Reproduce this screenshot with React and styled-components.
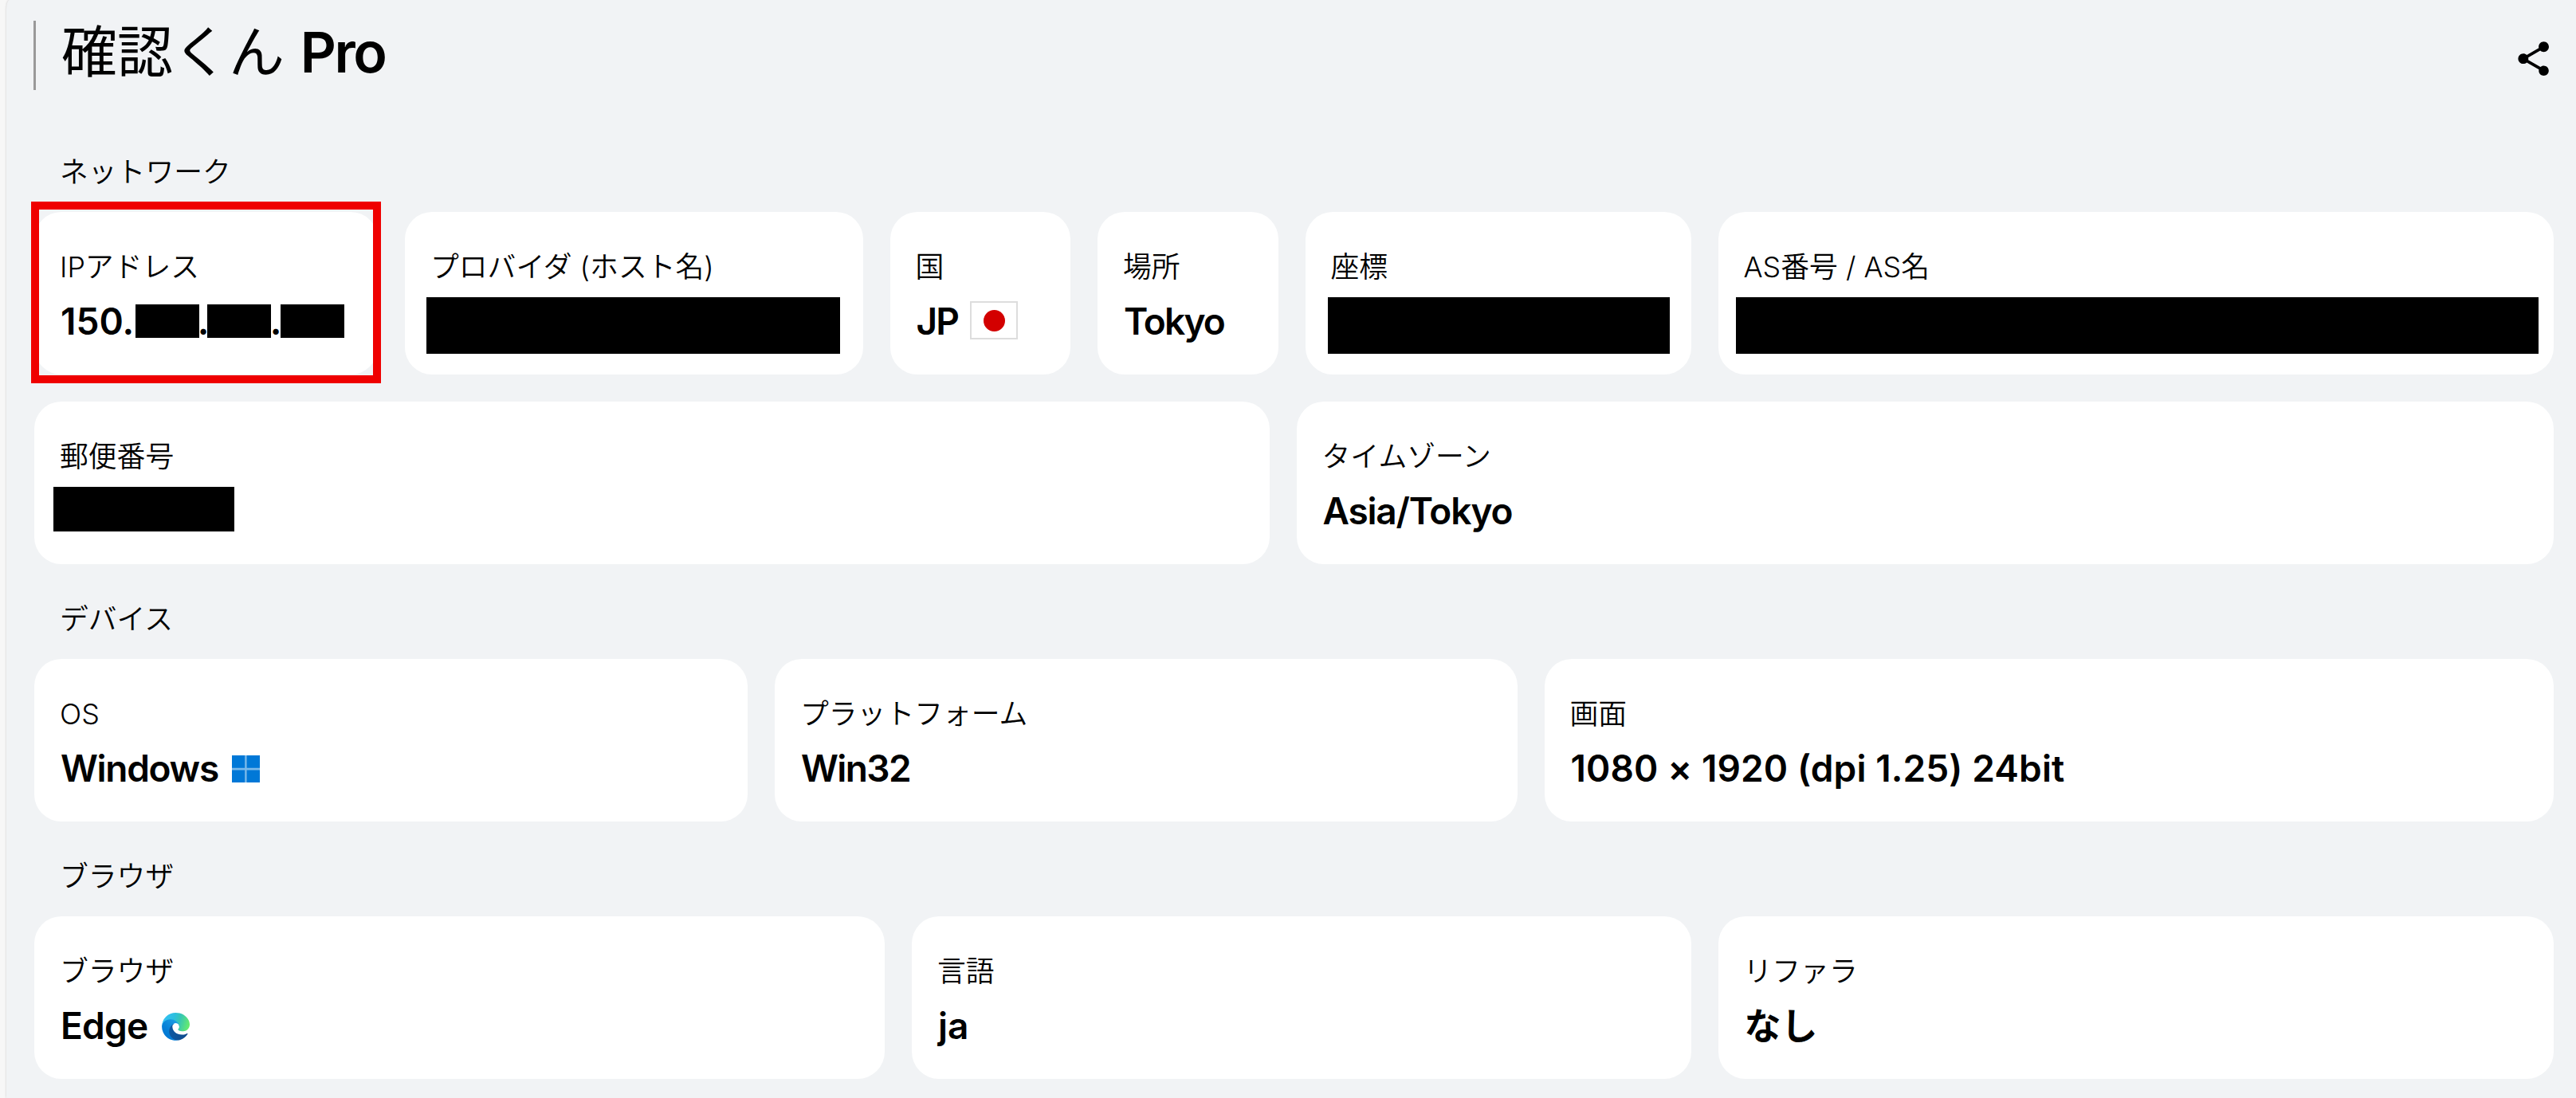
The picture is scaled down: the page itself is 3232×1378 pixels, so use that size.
import { MdShare } from "react-icons/md";
import styled, { createGlobalStyle } from "styled-components";

const WindowsIcon = () => (
  <svg width="35" height="34" viewBox="0 0 35 34">
    <rect width="35" height="34" fill="#7ab9ea" />
    <path fill="#0078d7" d="M0 0h16.2v15.7H0zM18.6 0H35v15.7H18.6zM0 18.4h16.2V34H0zM18.6 18.4H35V34H18.6z" />
  </svg>
);

const EdgeIcon = () => (
  <svg width="35" height="35" viewBox="0 0 256 256">
    <defs>
      <linearGradient id="edgeDark" x1="63" y1="178" x2="241" y2="178" gradientUnits="userSpaceOnUse">
        <stop offset="0" stopColor="#0c59a4" />
        <stop offset="1" stopColor="#114a8b" />
      </linearGradient>
      <linearGradient id="edgeMid" x1="157" y1="100" x2="46" y2="221" gradientUnits="userSpaceOnUse">
        <stop offset="0" stopColor="#1b9de2" />
        <stop offset="0.16" stopColor="#1595df" />
        <stop offset="0.67" stopColor="#0680d7" />
        <stop offset="1" stopColor="#0078d4" />
      </linearGradient>
      <linearGradient id="edgeTop" x1="20" y1="60" x2="245" y2="125" gradientUnits="userSpaceOnUse">
        <stop offset="0" stopColor="#35c1f1" />
        <stop offset="0.35" stopColor="#2cbfe0" />
        <stop offset="0.6" stopColor="#36c6b4" />
        <stop offset="1" stopColor="#66eb6e" />
      </linearGradient>
    </defs>
    <path
      fill="url(#edgeDark)"
      d="M231.07 190.54c-3.33 1.73-6.76 3.27-10.27 4.61a101.3 101.3 0 0 1-35.6 6.42c-46.92 0-87.79-32.27-87.79-73.69.13-11.4 6.42-21.85 16.43-27.3-42.44 1.78-53.35 46.01-53.35 71.92 0 73.27 67.53 80.7 82.08 80.7 7.84 0 19.67-2.28 26.77-4.53l1.3-.44a128.34 128.34 0 0 0 66.6-52.8 4 4 0 0 0-6.17-4.89z"
    />
    <path
      fill="url(#edgeMid)"
      d="M105.73 241.42a79.2 79.2 0 0 1-22.74-21.34 80.72 80.72 0 0 1 29.94-120.5c3.12-1.46 8.45-4.1 15.54-3.99a32.37 32.37 0 0 1 25.69 13.01 31.88 31.88 0 0 1 6.36 18.66c0-.2 24.46-79.6-80-79.6-43.9 0-80 41.66-80 78.21a130.15 130.15 0 0 0 12.11 56 128 128 0 0 0 156.38 67.11 75.55 75.55 0 0 1-62.78-8z"
    />
    <path
      fill="url(#edgeTop)"
      d="M152.33 148.86c-.81 1.05-3.3 2.5-3.3 5.66 0 2.61 1.7 5.12 4.72 7.23 14.38 10 41.49 8.68 41.56 8.68a59.56 59.56 0 0 0 30.27-8.35 61.38 61.38 0 0 0 30.43-52.88c.26-22.41-8-37.31-11.34-43.91C223.46 24.31 177.72.05 128 .05A128 128 0 0 0 0 127.29c.48-36.54 36.8-66.05 80-66.05 3.5 0 23.46.34 42 10.07 16.34 8.58 24.9 18.94 30.85 29.21 6.18 10.67 7.28 24.15 7.28 29.52 0 5.37-2.74 13.33-7.8 18.82z"
    />
  </svg>
);

const InfoCard = ({ label, highlight, children }) => (
  <Card $highlight={highlight}>
    <Label>{label}</Label>
    {children}
  </Card>
);

export default function App() {
  return (
    <>
      <GlobalStyle />
      <Page>
        <Header>
          <Title>
            確認くん <TitleSuffix>Pro</TitleSuffix>
          </Title>
          <ShareButton aria-label="share">
            <MdShare size={51.4} />
          </ShareButton>
        </Header>

        <section>
          <SectionLabel>ネットワーク</SectionLabel>
          <Grid $columns="431fr 574.5fr 226.5fr 226.5fr 484fr 1048.5fr">
            <InfoCard label="IPアドレス" highlight>
              <Value>
                <Octet $width={94}>150.</Octet>
                <OctetMask />
                <Octet $width={10} $center>.</Octet>
                <OctetMask />
                <Octet $width={12} $center>.</Octet>
                <OctetMask />
              </Value>
            </InfoCard>
            <InfoCard label="プロバイダ (ホスト名)">
              <Mask $width={519} $height={71} $shift={-6} />
            </InfoCard>
            <InfoCard label="国">
              <Value $tracking={-1.8}>
                JP
                <Flag />
              </Value>
            </InfoCard>
            <InfoCard label="場所">
              <Value $tracking={-1.9}>Tokyo</Value>
            </InfoCard>
            <InfoCard label="座標">
              <Mask $width={429} $height={71} $shift={-5} />
            </InfoCard>
            <InfoCard label="AS番号 / AS名">
              <Mask $width={1007} $height={71} $shift={-11} />
            </InfoCard>
          </Grid>
          <Grid $columns="1549.5fr 1577.5fr">
            <InfoCard label="郵便番号">
              <Mask $width={227} $height={56} $shift={-9} />
            </InfoCard>
            <InfoCard label="タイムゾーン">
              <Value $tracking={-1.2}>Asia/Tokyo</Value>
            </InfoCard>
          </Grid>
        </section>

        <section>
          <SectionLabel>デバイス</SectionLabel>
          <Grid $columns="895fr 931.5fr 1266.5fr">
            <InfoCard label="OS">
              <Value $tracking={-1.3}>
                Windows
                <Icon $gap={17}>
                  <WindowsIcon />
                </Icon>
              </Value>
            </InfoCard>
            <InfoCard label="プラットフォーム">
              <Value $tracking={-1.6}>Win32</Value>
            </InfoCard>
            <InfoCard label="画面">
              <Value $tracking={0.1}>1080 × 1920 (dpi 1.25) 24bit</Value>
            </InfoCard>
          </Grid>
        </section>

        <section>
          <SectionLabel>ブラウザ</SectionLabel>
          <Grid $columns="1067fr 977.5fr 1048.5fr">
            <InfoCard label="ブラウザ">
              <Value $tracking={-0.8}>
                Edge
                <Icon $gap={18}>
                  <EdgeIcon />
                </Icon>
              </Value>
            </InfoCard>
            <InfoCard label="言語">
              <Value>ja</Value>
            </InfoCard>
            <InfoCard label="リファラ">
              <Value>なし</Value>
            </InfoCard>
          </Grid>
        </section>
      </Page>
    </>
  );
}

const GlobalStyle = createGlobalStyle`
  * {
    box-sizing: border-box;
  }

  body {
    margin: 0;
    background: #f7f7f7;
    color: #000;
    font-family: Inter, "Noto Sans CJK JP", sans-serif;
    overflow: hidden;
  }
`;

const Page = styled.main`
  display: flex;
  flex-direction: column;
  gap: 34px;
  height: 1378px;
  margin-left: 8px;
  padding: 26px 28px 0 35px;
  background: #f1f3f5;
  border-top-left-radius: 4px 12px;
  box-shadow: 0 0 3px rgba(0, 0, 0, 0.18);
`;

const Header = styled.header`
  display: flex;
  justify-content: space-between;
  height: 87px;
  margin: 0 0 34px -1px;
  padding-left: 32px;
  border-left: 3px solid #999;
`;

const Title = styled.h1`
  margin: 0;
  font-size: 70px;
  font-weight: 400;
  line-height: 80px;
  white-space: pre;
`;

const TitleSuffix = styled.span`
  font-weight: 600;
  letter-spacing: -2.4px;
`;

const ShareButton = styled.button`
  display: flex;
  align-self: flex-start;
  margin: 22px 0 0;
  padding: 0;
  border: 0;
  background: none;
  color: #000;
`;

const SectionLabel = styled.h2`
  margin: 1px 0 16px;
  padding-left: 32px;
  font-size: 35.8px;
  font-weight: 350;
  line-height: 68px;
`;

const Grid = styled.div`
  display: grid;
  grid-template-columns: ${(props) => props.$columns};
  gap: 34px;

  & + & {
    margin-top: 34px;
  }
`;

const Card = styled.div`
  position: relative;
  min-width: 0;
  height: 204px;
  padding: 35px 0 0 33px;
  border-radius: 34px;
  background: #fff;

  &::after {
    content: "";
    display: ${(props) => (props.$highlight ? "block" : "none")};
    position: absolute;
    inset: -13px -4px -11px -4px;
    border: 10px solid #ef0000;
  }
`;

const Label = styled.div`
  margin: 0 0 4px -1px;
  font-size: 35.8px;
  font-weight: 350;
  line-height: 68px;
  white-space: nowrap;
`;

const Value = styled.div`
  display: flex;
  height: 60px;
  font-size: 46px;
  font-weight: 600;
  line-height: 60px;
  letter-spacing: ${(props) => props.$tracking || 0}px;
  white-space: nowrap;
`;

const Octet = styled.span`
  display: flex;
  justify-content: ${(props) => (props.$center ? "center" : "flex-start")};
  width: ${(props) => props.$width}px;
`;

const OctetMask = styled.span`
  width: 80px;
  height: 42px;
  margin-top: 9px;
  background: #000;
`;

const Mask = styled.div`
  width: ${(props) => props.$width}px;
  height: ${(props) => props.$height}px;
  margin-left: ${(props) => props.$shift}px;
  background: #000;
`;

const Icon = styled.span`
  display: flex;
  margin: 14px 0 0 ${(props) => props.$gap}px;

  svg {
    display: block;
  }
`;

const Flag = styled.span`
  display: flex;
  align-items: center;
  justify-content: center;
  width: 60px;
  height: 48px;
  margin: 5px 0 0 15px;
  border: 2px solid #ddd;

  &::before {
    content: "";
    width: 27px;
    height: 27px;
    border-radius: 50%;
    background: #d30000;
  }
`;
